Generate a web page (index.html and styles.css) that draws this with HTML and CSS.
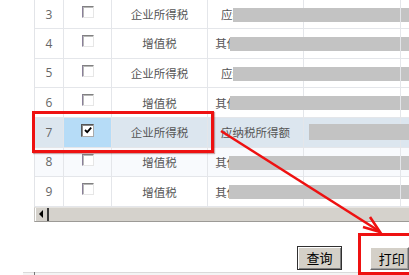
FILE: index.html
```html
<!DOCTYPE html>
<html lang="zh-CN">
<head>
<meta charset="utf-8">
<title>税种列表</title>
<link rel="stylesheet" href="styles.css">
</head>
<body>
<div class="page">
  <div class="grid">
    <div class="row first">
      <div class="c num">3</div>
      <div class="c chk"><span class="cb"></span></div>
      <div class="c type">企业所得税</div>
      <div class="c item"><span class="txt">应纳税所得额</span><span class="mask m-a"></span></div>
      <div class="c col5"></div>
      <div class="c col6"></div>
    </div>
    <div class="row">
      <div class="c num">4</div>
      <div class="c chk"><span class="cb"></span></div>
      <div class="c type">增值税</div>
      <div class="c item"><span class="txt">其他应税所得额</span><span class="mask m-b"></span></div>
      <div class="c col5"></div>
      <div class="c col6"></div>
    </div>
    <div class="row">
      <div class="c num">5</div>
      <div class="c chk"><span class="cb"></span></div>
      <div class="c type">企业所得税</div>
      <div class="c item"><span class="txt">应纳税所得额</span><span class="mask m-a"></span></div>
      <div class="c col5"></div>
      <div class="c col6"></div>
    </div>
    <div class="row">
      <div class="c num">6</div>
      <div class="c chk"><span class="cb"></span></div>
      <div class="c type">增值税</div>
      <div class="c item"><span class="txt">其他应税所得额</span><span class="mask m-b"></span></div>
      <div class="c col5"></div>
      <div class="c col6"></div>
    </div>
    <div class="row sel">
      <div class="c num">7</div>
      <div class="c chk"><span class="cb checked"><svg viewBox="0 0 10 10" width="10" height="10"><path d="M2 5 L4.2 7.2 L8.2 2.6" fill="none" stroke="#000" stroke-width="1.8"/></svg></span></div>
      <div class="c type">企业所得税</div>
      <div class="c item"><span class="txt">应纳税所得额</span></div>
      <div class="c col5"><span class="mask m-c"></span></div>
      <div class="c col6"></div>
    </div>
    <div class="row tint">
      <div class="c num">8</div>
      <div class="c chk"><span class="cb"></span></div>
      <div class="c type">增值税</div>
      <div class="c item"><span class="txt">其他应税所得额</span><span class="mask m-d"></span></div>
      <div class="c col5"></div>
      <div class="c col6"></div>
    </div>
    <div class="row">
      <div class="c num">9</div>
      <div class="c chk"><span class="cb"></span></div>
      <div class="c type">增值税</div>
      <div class="c item"><span class="txt">其他应税所得额</span><span class="mask m-d"></span></div>
      <div class="c col5"></div>
      <div class="c col6"></div>
    </div>
  </div>
  <div class="hscroll">
    <div class="sb-btn"><span class="tri"></span></div>
    <div class="sb-track"></div>
  </div>
  <div class="actions">
    <button class="btn query">查询</button>
    <button class="btn print">打印</button>
  </div>
  <div class="footer-line"><span class="tick"></span></div>

  <div class="mark box-row"></div>
  <div class="mark box-print"></div>
  <svg class="arrow" width="409" height="275" viewBox="0 0 409 275">
    <line x1="221" y1="131" x2="379" y2="231" stroke="#ee1111" stroke-width="2.6"/>
    <polyline points="363,227 380,232 370,217" fill="none" stroke="#ee1111" stroke-width="2.6" stroke-linejoin="miter"/>
  </svg>
</div>
</body>
</html>
```

FILE: styles.css
```css
html, body {
  margin: 0;
  padding: 0;
  background: #ffffff;
}

.page {
  position: relative;
  width: 409px;
  height: 275px;
  overflow: hidden;
  font-family: "Noto Sans CJK SC", "Noto Sans", sans-serif;
  color: #555;
}

.grid {
  margin-left: 34px;
  width: 375px;
  border-left: 1px solid #e2e4e8;
}

.row {
  display: grid;
  grid-template-columns: 29px 48px 96px 96px 97px 1fr;
  height: 29.67px;
  box-sizing: border-box;
  border-bottom: 1px solid #e4e6ea;
  background: #ffffff;
}

.row.first {
  height: 29px;
}

.row.sel {
  background: #dce6ef;
}

.row.tint {
  background: #f8fafd;
}

.c {
  position: relative;
  box-sizing: border-box;
  border-right: 1px solid #e4e6ea;
  display: flex;
  align-items: center;
  justify-content: center;
  font-size: 11.5px;
  white-space: nowrap;
}

.num {
  font-family: "Open Sans", "Noto Sans", sans-serif;
  font-size: 12px;
  color: #666;
}

.chk {
  align-items: flex-start;
  padding-top: 6px;
}

.row.sel .chk {
  background: #b6dcf7;
}

.cb {
  display: block;
  width: 12px;
  height: 12px;
  box-sizing: border-box;
  background: #ffffff;
  border: 1px solid;
  border-color: #808080 #e6e6e6 #e6e6e6 #8a7f9a;
  box-shadow: inset 1px 1px 0 #b8b8b8;
}

.cb.checked {
  width: 13px;
  height: 13px;
  border-color: #555 #aaa #aaa #555;
  box-shadow: inset 1px 1px 0 #888;
  display: flex;
  align-items: center;
  justify-content: center;
}

.type {
  color: #555;
}

.item {
  color: #555;
}

.txt {
  display: block;
}

.mask {
  position: absolute;
  background: #c3c3c3;
  height: 14px;
  width: 200px;
}

.m-a {
  left: 25px;
  top: 8px;
}

.m-b {
  left: 22px;
  top: 8px;
}

.m-d {
  left: 21px;
  top: 8px;
}

.m-c {
  left: 5px;
  top: 6px;
  height: 16px;
}

.hscroll {
  margin-left: 34px;
  display: flex;
  height: 15px;
  box-sizing: border-box;
  background: #d5d2cc;
  border-top: 1px solid #e6e4e0;
  border-left: 1px solid #c8c6c2;
  border-bottom: 1px solid #9c9a96;
}

.sb-btn {
  width: 14px;
  box-sizing: border-box;
  border-right: 2px solid #3a3a3a;
  border-left: 1px solid #ffffff;
  display: flex;
  align-items: center;
  justify-content: center;
}

.tri {
  display: block;
  width: 0;
  height: 0;
  border-top: 4px solid transparent;
  border-bottom: 4px solid transparent;
  border-right: 4px solid #000;
  margin-right: 2px;
}

.sb-track {
  flex: 1;
}

.actions {
  display: flex;
  align-items: flex-start;
  padding-left: 297px;
  margin-top: 24px;
  gap: 28px;
}

.btn {
  margin: 0;
  padding: 0;
  font-family: "Noto Sans CJK SC", sans-serif;
  font-size: 13px;
  color: #000;
  background: #d4d0c8;
  line-height: 1;
}

.query {
  width: 46px;
  height: 24px;
  border: 1px solid #303030;
  box-shadow: inset 1px 1px 0 #ffffff, inset -1px -1px 0 #808080;
}

.print {
  width: 40px;
  height: 23px;
  margin-top: 1px;
  border: 1px solid;
  border-color: #ffffff #6a6a6a #6a6a6a #ffffff;
  box-shadow: inset -1px -1px 0 #a0a0a0;
  text-align: left;
  padding-left: 8px;
}

.footer-line {
  position: relative;
  margin-top: 2px;
  margin-left: 23px;
  border-top: 1px solid #dadada;
  height: 4px;
  background: #f4f4f4;
}

.tick {
  position: absolute;
  left: 11px;
  top: -1px;
  width: 1px;
  height: 5px;
  background: #777;
}

.mark {
  position: absolute;
  box-sizing: border-box;
  border: 3px solid #ee1111;
  box-shadow: 1px 1px 1px rgba(120, 0, 0, 0.35);
}

.box-row {
  left: 32px;
  top: 111px;
  width: 182px;
  height: 42px;
}

.box-print {
  left: 358px;
  top: 233px;
  width: 60px;
  height: 42px;
}

.arrow {
  position: absolute;
  left: 0;
  top: 0;
  pointer-events: none;
}
```
